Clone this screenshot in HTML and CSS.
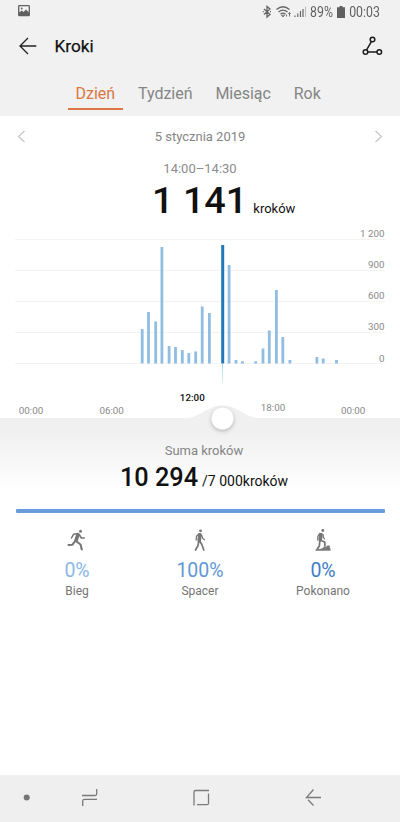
FILE: index.html
```html
<!DOCTYPE html>
<html lang="pl">
<head>
<meta charset="utf-8">
<title>Kroki</title>
<link rel="stylesheet" href="styles.css">
</head>
<body>
<header class="top">
  <div class="status">
    <svg class="status-photo" width="12" height="12" viewBox="0 0 12 12"><rect x=".7" y=".7" width="10.6" height="10" rx=".6" fill="none" stroke="#606060" stroke-width="1.300"/><path d="M1 10V7.500l3-2L5.500 7 8 4.500l3 3V10z" fill="#606060"/><circle cx="3.700" cy="3.500" r=".9" fill="#606060"/></svg>
    <div class="status-right">
      <svg width="46" height="14" viewBox="0 0 46 14" fill="none" stroke="#666">
        <path d="M2 4l6 5.500-3 2.500V1.500L8 4 2 9.500M.8 6.700h1M8 6.700h1" stroke-width="1.300"/>
        <path d="M14.500 4.500Q21 -1 27.500 4.500M16.500 7Q21 3.200 25.500 7M18.500 9.200Q21 7.200 23.500 9.200" stroke-width="1.300"/>
        <path d="M19.500 10.200h3L21 12zM24.500 11.500V9.500M27.500 7.500v4M26.300 9l1.200-1.500L28.700 9" stroke-width=".9"/>
        <path d="M33 12v-1.500M35.800 12V8.500M38.500 12V6M41 12V4" stroke-width="1.200"/><path d="M43.500 12V1.500" stroke="#bbb"/>
      </svg>
      <span class="percent">89%</span>
      <svg class="battery" width="8" height="12" viewBox="0 0 8 12" fill="#606060"><path d="M2.500 0h3v1.200H8V12H0V1.200h2.500z"/></svg>
      <span>00:03</span>
    </div>
  </div>
  <div class="bar">
    <svg width="18" height="18" viewBox="0 0 18 18" fill="none" stroke="#222" stroke-width="1.300"><path d="M17.300 9H1M9 1L1 9l8 8"/></svg>
    <h1>Kroki</h1>
    <svg class="share" width="21" height="20" viewBox="0 0 21 20" fill="none" stroke="#1c1c1c" stroke-width="1.500"><circle cx="10.500" cy="3.500" r="2.300"/><circle cx="3.500" cy="16" r="2.300"/><circle cx="17.300" cy="16" r="2.300"/><path d="M9.400 5.600L4.600 13.900M5.800 16H15"/></svg>
  </div>
  <nav class="tabs"><a class="active">Dzień</a><a>Tydzień</a><a>Miesiąc</a><a>Rok</a></nav>
</header>
<main>
  <div class="date">
    <svg width="9" height="13" viewBox="0 0 9 13"><path d="M7.500 1L1.500 6.500l6 5.500"/></svg>
    <span>5 stycznia 2019</span>
    <svg width="9" height="13" viewBox="0 0 9 13"><path d="M1.500 1l6 5.500-6 5.500"/></svg>
  </div>
  <div class="hour">14:00–14:30</div>
  <div class="steps"><strong>1 141</strong><span>kroków</span></div>
  <svg class="chart" width="400" height="192" viewBox="0 226 400 192">
    <defs>
      <linearGradient id="tail" x1="0" y1="0" x2="0" y2="1"><stop offset="0" stop-color="#a9d3ee"/><stop offset="1" stop-color="#e2f4f7"/></linearGradient>
      <filter id="knob" x="-50%" y="-50%" width="200%" height="200%"><feDropShadow dx="0" dy="1.500" stdDeviation="2" flood-opacity=".28"/></filter>
    </defs>
    <path class="grid" d="M15 239.500H385M15 270.500H385M15 301.500H385M15 332.500H385M15 363.500H385"/>
    <g class="scale"><text x="384.500" y="237">1 200</text><text x="384.500" y="268.200">900</text><text x="384.500" y="299.200">600</text><text x="384.500" y="330.200">300</text><text x="384.500" y="361.500">0</text></g>
    <path class="bars" d="M142.200 363.500V329M148.500 363.500V312M155.700 363.500V321.500M161.900 363.500V247M169.100 363.500V346M175.500 363.500V347M182.300 363.500V350M188.800 363.500V353M195.700 363.500V351.500M202.200 363.500V306.500M209.400 363.500V313M229.100 363.500V265M236 363.500V360M242.400 363.500V361.300M255.700 363.500V361.300M263 363.500V348.500M269.300 363.500V330.500M276.400 363.500V290M282.800 363.500V337M289.900 363.500V360M316.900 363.500V357M323.200 363.500V358.500M336.500 363.500V360"/>
    <rect x="221.200" y="245" width="3" height="118.500" fill="#2378bb"/>
    <rect x="222" y="363.500" width="1" height="20" fill="url(#tail)"/>
    <path d="M186 418C200 418 207 405.500 222.500 405.500S245 418 259 418z" fill="#f0f0f0"/>
    <g class="times"><text x="31" y="413.700">00:00</text><text x="111.700" y="413.700">06:00</text><text class="now" x="192.300" y="401">12:00</text><text x="273" y="410.500">18:00</text><text x="353.200" y="413.700">00:00</text></g>
    <circle cx="222.500" cy="418.500" r="10.800" fill="#fff" filter="url(#knob)"/>
  </svg>
  <section class="summary">
    <div class="caption">Suma kroków</div>
    <div class="total"><strong>10 294</strong><span>/7 000kroków</span></div>
  </section>
  <div class="progress"></div>
  <section class="stats">
    <div class="stat run">
      <svg width="22" height="22" viewBox="0 0 22 22" fill="none" stroke="#767676" stroke-linecap="round" stroke-linejoin="round"><circle cx="14.500" cy="2.300" r="1.500" fill="#767676" stroke="none"/><path d="M12 5.700L10 11.500" stroke-width="3.600"/><path d="M11.500 4.700L7.500 5.300 5.500 9M13.500 6l1.800 3h3" stroke-width="1.500"/><path d="M10 12l4.500 3.500 1.300 5M8.800 12.500L6.500 15.700 2.500 16" stroke-width="2.100"/></svg>
      <strong>0%</strong><span>Bieg</span>
    </div>
    <div class="stat walk">
      <svg width="22" height="22" viewBox="0 0 22 22" fill="none" stroke="#767676" stroke-linecap="round" stroke-linejoin="round"><circle cx="11.500" cy="1.800" r="1.400" fill="#767676" stroke="none"/><path d="M10.900 5.700L10.200 11.500" stroke-width="3.600"/><path d="M10 4.700L7.500 7.300 7.200 11M12.500 6l1.300 3.500 1.700 1.200" stroke-width="1.300"/><path d="M11 12.500l1.800 3 2 5.500M9.700 12.500l-.7 4L6.500 21" stroke-width="1.700"/></svg>
      <strong>100%</strong><span>Spacer</span>
    </div>
    <div class="stat climb">
      <svg width="22" height="22" viewBox="0 0 22 22" fill="none" stroke="#767676" stroke-linecap="round" stroke-linejoin="round"><circle cx="10.800" cy="1.500" r="1.400" fill="#767676" stroke="none"/><path d="M9 5.500L8.300 10.500" stroke-width="3.600"/><path d="M7.500 4.500L5.800 7.500v3.500M11 5.500l.5 3 1 1.500" stroke-width="1.300"/><path d="M9 11.500l3.700 1.500.2 3.500M7.800 12l-.5 5L5 20.500" stroke-width="1.800"/><path d="M3.500 21.700v-1.200l5-.7 2-.6 1.500-1.700h2.500l.8-1h2.500v2.500h.7v2.700z" fill="#7c7c7c" stroke="none"/></svg>
      <strong>0%</strong><span>Pokonano</span>
    </div>
  </section>
</main>
<footer class="system">
  <svg width="400" height="46" viewBox="0 775 400 46" fill="none" stroke="#7a7a7a" stroke-width="1.300"><circle cx="26.700" cy="797.500" r="3" fill="#757575" stroke="none"/><path d="M82 795.500H95Q96.700 795.500 96.700 794V789M97 799.300H84.500Q82.700 799.300 82.700 801V806M209 790.500H195.500Q194 790.500 194 792V805.500M197 804.700H207Q208.500 804.700 208.500 803.200V793.500M321 797.500H306.500L313.500 789.500M308 799.800L313.500 805.500"/></svg>
</footer>
</body>
</html>
```

FILE: styles.css
```css
* { box-sizing: border-box; }
body {
  margin: 0;
  width: 400px;
  height: 822px;
  display: flex;
  flex-direction: column;
  background: #fff;
  font-family: Roboto, "Liberation Sans", sans-serif;
  color: #111;
  overflow: hidden;
}
svg { display: block; flex: none; }
.top { height: 116px; background: #f1f1f1; }
.status {
  height: 23px;
  padding: 0 20px 0 18px;
  display: flex;
  align-items: center;
  justify-content: space-between;
  font-size: 14px;
  color: #606060;
}
.status-photo { margin-top: -2px; }
.status-right { display: flex; align-items: center; }
.status-right span { display: block; transform: scaleX(.88); transform-origin: right; }
.status-right .percent { margin-left: -1px; }
.battery { margin: 0 0 0 4px; }
.bar { height: 46px; display: flex; align-items: center; padding: 0 17px 0 19px; }
.bar h1 { margin: 0 0 0 17.500px; font-size: 17.200px; font-weight: 400; line-height: 20px; -webkit-text-stroke: .25px #111; }
.share { margin-left: auto; }
.tabs { display: flex; gap: 7.800px; margin-left: 68px; padding-top: 12px; font-size: 16px; line-height: 25px; color: #858585; }
.tabs a { height: 29px; padding: 0 7.500px; }
.tabs .active { color: #d97643; border-bottom: 2px solid #dd7748; }
main { flex: 1; }
.date { height: 40px; padding: 0 17px; display: flex; align-items: center; justify-content: space-between; color: #858585; font-size: 13px; }
.date svg { fill: none; stroke: #c5c5c5; stroke-width: 1.200; }
.hour { height: 24px; line-height: 26px; text-align: center; color: #8c8c8c; font-size: 13px; }
.steps { height: 46px; display: flex; align-items: baseline; padding-left: 152px; }
.steps strong { font-size: 37.800px; line-height: 40px; font-weight: 500; }
.steps span { margin-left: 6px; font-size: 13px; }
.chart { position: relative; overflow: visible; }
.chart text { font-family: Roboto, sans-serif; font-size: 9.800px; fill: #898989; }
.grid { stroke: #f2f3f3; stroke-width: 1; }
.bars { stroke: #90bde2; stroke-width: 2.800; fill: none; }
.chart .scale { text-anchor: end; }
.chart .times { text-anchor: middle; }
.chart .now { fill: #111; font-weight: 500; }
.summary { height: 90px; padding-top: 23px; background: linear-gradient(#f0f0f0 15%, #fff 82%); text-align: center; }
.caption { font-size: 13px; line-height: 20px; color: #858585; margin-left: 8px; }
.total { display: flex; justify-content: center; align-items: baseline; gap: 4px; margin-left: 8px; line-height: 34px; }
.total strong { font-size: 25.300px; font-weight: 500; }
.total span { font-size: 14px; }
.progress { height: 4px; margin: .500px 15.500px 0; border-radius: 1px; background: #699bdd; }
.stats { display: grid; grid-template-columns: repeat(3, 123px); padding: 16.500px 15.500px 0; }
.stat { display: flex; flex-direction: column; align-items: center; color: #757575; font-size: 12px; }
.stat strong { font-size: 19.500px; font-weight: 400; line-height: 24px; margin-top: 8px; }
.stat span { line-height: 16px; }
.run strong { color: #8ab8e5; }
.walk strong { color: #6098d4; }
.climb strong { color: #3d7dc6; }
.system { height: 47px; background: #efefef; }
```
